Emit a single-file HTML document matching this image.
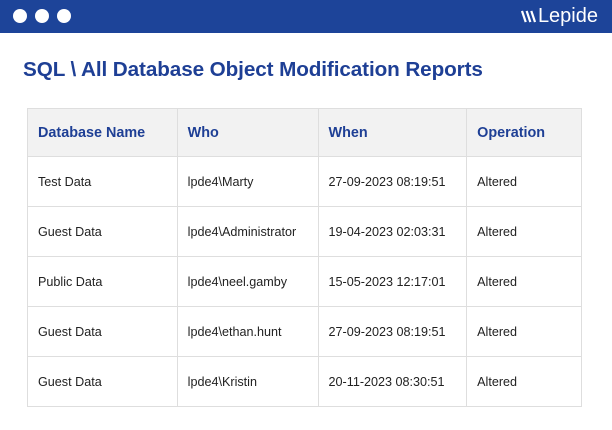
<!DOCTYPE html>
<html><head><style>
body{margin:0;width:612px;height:430px;background:#fff;font-family:"Liberation Sans",sans-serif;position:relative;overflow:hidden}
.top{position:absolute;left:0;top:0;width:612px;height:33px;background:#1d4499}
.dot{position:absolute;top:9px;width:14px;height:14px;border-radius:50%;background:#fff}
.logo{position:absolute;right:14px;top:5px;color:#fff;font-size:20px;font-family:"Liberation Sans",sans-serif;font-weight:normal}
h1{position:absolute;left:23px;top:58px;margin:0;font-size:20.7px;font-weight:bold;color:#1e3f95;letter-spacing:-0.1px}
table{position:absolute;left:27px;top:108px;border-collapse:collapse;width:555px}
td{border:1px solid #dedede;padding:0 0 0 10px;height:49px;font-size:12.6px;color:#222}
tr.h td{background:#f2f2f2;font-weight:bold;color:#1e3f95;font-size:14.4px;height:47px}
</style></head><body>
<div class="top">
<div class="dot" style="left:13px"></div><div class="dot" style="left:35px"></div><div class="dot" style="left:57px"></div>
<div class="logo"><svg width="15" height="13" viewBox="0 0 16 14" style="vertical-align:-1px;margin-right:2px"><g stroke="#fff" stroke-width="2.4"><line x1="1" y1="1" x2="5" y2="13"/><line x1="6" y1="1" x2="10" y2="13"/><line x1="11" y1="1" x2="15" y2="13"/></g></svg>Lepide</div>
</div>
<h1>SQL \ All Database Object Modification Reports</h1>
<table>
<colgroup><col style="width:150px"><col style="width:141px"><col style="width:149px"><col style="width:115px"></colgroup>
<tr class="h"><td>Database Name</td><td>Who</td><td>When</td><td>Operation</td></tr>
<tr><td>Test Data</td><td>lpde4\Marty</td><td>27-09-2023 08:19:51</td><td>Altered</td></tr>
<tr><td>Guest Data</td><td>lpde4\Administrator</td><td>19-04-2023 02:03:31</td><td>Altered</td></tr>
<tr><td>Public Data</td><td>lpde4\neel.gamby</td><td>15-05-2023 12:17:01</td><td>Altered</td></tr>
<tr><td>Guest Data</td><td>lpde4\ethan.hunt</td><td>27-09-2023 08:19:51</td><td>Altered</td></tr>
<tr><td>Guest Data</td><td>lpde4\Kristin</td><td>20-11-2023 08:30:51</td><td>Altered</td></tr>
</table>
</body></html>
